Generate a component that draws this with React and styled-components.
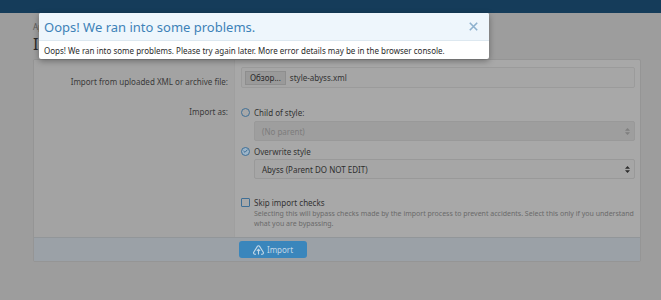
import React from "react"
import styled, { createGlobalStyle } from "styled-components"

const GlobalStyle = createGlobalStyle`
  html, body {
    margin: 0;
    padding: 0;
    background: #9d9d9d;
    font-family: "Noto Sans", "Open Sans", sans-serif;
    color: #3c3c3c;
  }
  * { box-sizing: border-box; }
`

const Page = styled.div`
  position: relative;
  width: 661px;
  height: 300px;
  overflow: hidden;
  background: #9d9d9d;
`

const TopBar = styled.div`
  height: 13px;
  background: #153c5a;
`

const Main = styled.div`
  padding: 0 20px 0 33px;
`

const Breadcrumb = styled.div`
  font-size: 8px;
  line-height: 12px;
  padding-top: 8px;
  color: #5a5a5a;
`

const PageTitle = styled.h1`
  margin: 4px 0 8px;
  font-size: 16px;
  line-height: 14px;
  font-weight: 400;
  color: #2a2a2a;
`

const Block = styled.form`
  border: 1px solid #959595;
  border-radius: 2px;
  background: #a8a8a8;
  overflow: hidden;
`

const Row = styled.div`
  display: flex;
`

const Label = styled.div`
  width: 200px;
  flex: none;
  background: #a3a3a3;
  text-align: right;
  padding: ${(p) => p.$top || 0}px 6px 0 0;
  font-size: 8px;
  line-height: 12px;
  color: #3a3a3a;
`

const Control = styled.div`
  flex: 1;
  display: flex;
  flex-direction: column;
  padding: ${(p) => p.$pad};
  border-left: 1px solid #9f9f9f;
`

const FileBox = styled.div`
  display: flex;
  align-items: center;
  gap: 4px;
  height: 21px;
  padding: 0 3px;
  border: 1px solid #9b9b9b;
  border-radius: 2px;
  background: #a6a6a6;
  font-size: 8px;
  color: #333;
`

const FileButton = styled.span`
  display: inline-flex;
  align-items: center;
  height: 14px;
  padding: 0 4px;
  border: 1px solid #8e8e8e;
  background: #9a9a9a;
  color: #2a2a2a;
  font-size: 8px;
`

const Choice = styled.label`
  display: flex;
  align-items: center;
  gap: 4px;
  height: 14px;
  font-size: 8px;
  color: #333;
`

const Radio = styled.span`
  width: 9px;
  height: 9px;
  flex: none;
  border-radius: 50%;
  border: 1px solid #3f6f96;
  display: inline-flex;
  align-items: center;
  justify-content: center;
  background: ${(p) => (p.$checked ? "#9cb4c8" : "transparent")};
`

const Checkbox = styled.span`
  width: 9px;
  height: 9px;
  flex: none;
  border-radius: 1px;
  border: 1px solid #3f6f96;
`

const Select = styled.div`
  display: flex;
  align-items: center;
  justify-content: space-between;
  height: 20px;
  margin: ${(p) => p.$margin};
  padding: 0 4px 0 7px;
  border: 1px solid #999;
  border-radius: 2px;
  background: ${(p) => (p.$disabled ? "#9e9e9e" : "#a6a6a6")};
  color: ${(p) => (p.$disabled ? "#7c7c7c" : "#2e2e2e")};
  font-size: 8px;
`

const Arrows = styled.svg`
  width: 5px;
  height: 7px;
  fill: ${(p) => (p.$disabled ? "#7f7f7f" : "#2c2c2c")};
`

const Hint = styled.div`
  margin: 0 0 0 13px;
  font-size: 7px;
  line-height: 10px;
  color: #6a6a6a;
`

const Footer = styled.div`
  display: flex;
  border-top: 1px solid #929699;
  background: #9ba1a7;
  height: 24px;
  padding: 3px 0 0 205px;
`

const Button = styled.button`
  display: flex;
  align-items: center;
  justify-content: center;
  gap: 3px;
  width: 68px;
  height: 17px;
  border: none;
  border-radius: 3px;
  background: #3a86bc;
  color: #c2d8e8;
  font-family: inherit;
  font-size: 8px;
  padding: 0;
`

const Modal = styled.div`
  position: absolute;
  left: 39px;
  top: 13px;
  width: 450px;
  background: #fff;
  border-radius: 2px;
  box-shadow: 0 2px 6px rgba(0, 0, 0, 0.35);
  overflow: hidden;
`

const ModalHeader = styled.div`
  display: flex;
  align-items: center;
  justify-content: space-between;
  height: 28px;
  padding: 0 11px 0 5px;
  background: #eef6fc;
  border-bottom: 1px solid #dde8f0;
`

const ModalTitle = styled.div`
  font-size: 13px;
  color: #3d82b8;
`

const CloseX = styled.svg`
  width: 9px;
  height: 9px;
  stroke: #8db1ce;
  stroke-width: 1.6;
`

const ModalBody = styled.div`
  height: 18px;
  padding: 0 5px;
  display: flex;
  align-items: center;
  font-size: 8px;
  color: #2a2a2a;
`

const SelectArrows = ({ disabled }) => (
  <Arrows viewBox="0 0 5 7" $disabled={disabled}>
    <path d="M2.5 0 L5 2.8 H0 Z M2.5 7 L5 4.2 H0 Z" />
  </Arrows>
)

const App = () => {
  return (
    <Page>
      <GlobalStyle />
      <TopBar />
      <Main>
        <Breadcrumb>Appearance</Breadcrumb>
        <PageTitle>Import style</PageTitle>
        <Block>
          <Row>
            <Label $top={16}>Import from uploaded XML or archive file:</Label>
            <Control $pad="7px 5px 7px 6px">
              <FileBox>
                <FileButton>Обзор...</FileButton>
                style-abyss.xml
              </FileBox>
            </Control>
          </Row>
          <Row>
            <Label $top={11}>Import as:</Label>
            <Control $pad="10px 5px 8px 6px">
              <Choice>
                <Radio />
                Child of style:
              </Choice>
              <Select $disabled $margin="2px 0 0 13px">
                (No parent)
                <SelectArrows disabled />
              </Select>
              <Choice style={{ marginTop: 3 }}>
                <Radio $checked>
                  <svg width="5" height="4" viewBox="0 0 5 4">
                    <path d="M0.5 2 L2 3.3 L4.5 0.6" fill="none" stroke="#3f6f96" strokeWidth="1" />
                  </svg>
                </Radio>
                Overwrite style
              </Choice>
              <Select $margin="1px 0 0 13px">
                Abyss (Parent DO NOT EDIT)
                <SelectArrows />
              </Select>
            </Control>
          </Row>
          <Row>
            <Label />
            <Control $pad="8px 5px 8px 6px">
              <Choice>
                <Checkbox />
                Skip import checks
              </Choice>
              <Hint>
                Selecting this will bypass checks made by the import process to prevent accidents. Select this only if you understand what you are bypassing.
              </Hint>
            </Control>
          </Row>
          <Footer>
            <Button type="button">
              <svg width="11" height="10" viewBox="0 0 11 10">
                <path d="M3 9.2 H1.8 A1.3 1.3 0 0 1 0.7 7.3 L4.4 1.4 A1.3 1.3 0 0 1 6.6 1.4 L10.3 7.3 A1.3 1.3 0 0 1 9.2 9.2 H8" fill="none" stroke="#c2d8e8" strokeWidth="1.1" />
                <path d="M5.5 4.2 V9.4 M3.9 5.8 L5.5 4.2 L7.1 5.8" fill="none" stroke="#c2d8e8" strokeWidth="1.1" />
              </svg>
              Import
            </Button>
          </Footer>
        </Block>
      </Main>
      <Modal>
        <ModalHeader>
          <ModalTitle>Oops! We ran into some problems.</ModalTitle>
          <CloseX viewBox="0 0 9 9">
            <path d="M0.8 0.8 L8.2 8.2 M8.2 0.8 L0.8 8.2" />
          </CloseX>
        </ModalHeader>
        <ModalBody>
          Oops! We ran into some problems. Please try again later. More error details may be in the browser console.
        </ModalBody>
      </Modal>
    </Page>
  )
}

export default App
